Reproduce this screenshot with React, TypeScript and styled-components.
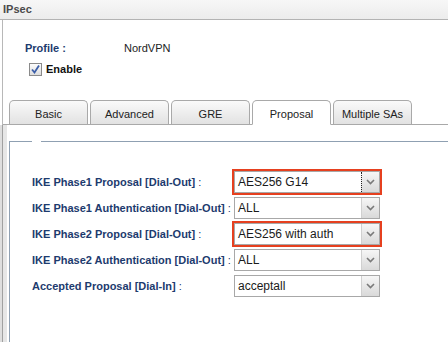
import styled, { createGlobalStyle } from 'styled-components'

const GlobalStyle = createGlobalStyle`
	html, body {
		margin: 0;
		padding: 0;
		background: #fff;
		font-family: "Liberation Sans", Arial, sans-serif;
		font-size: 11px;
	}
`

const tabs = ['Basic', 'Advanced', 'GRE', 'Proposal', 'Multiple SAs']

const rows = [
	{ label: 'IKE Phase1 Proposal [Dial-Out]', value: 'AES256 G14', marked: true, focused: true },
	{ label: 'IKE Phase1 Authentication [Dial-Out]', value: 'ALL' },
	{ label: 'IKE Phase2 Proposal [Dial-Out]', value: 'AES256 with auth', marked: true },
	{ label: 'IKE Phase2 Authentication [Dial-Out]', value: 'ALL' },
	{ label: 'Accepted Proposal [Dial-In]', value: 'acceptall' },
]

const Chevron = () => (
	<svg width="9" height="6" viewBox="0 0 9 6">
		<path d="M1 1 L4.5 4.5 L8 1" fill="none" stroke="#7a7a7a" strokeWidth="1.6" />
	</svg>
)

const App = () => {
	return (
		<Page>
			<GlobalStyle />
			<Header>IPsec</Header>
			<Content>
				<Profile>
					<Label>Profile :</Label>
					<Value>NordVPN</Value>
				</Profile>
				<EnableRow>
					<Check>
						<svg width="11" height="11" viewBox="0 0 11 11">
							<path d="M2 5.5 L4.5 8.5 L9 1.5" fill="none" stroke="#3b5ea8" strokeWidth="1.8" />
						</svg>
					</Check>
					Enable
				</EnableRow>
				<TabBar>
					{tabs.map(t => (
						<Tab key={t} $active={t === 'Proposal'}>{t}</Tab>
					))}
				</TabBar>
				<TabPanel>
					<Fieldset>
						<legend>&nbsp;&nbsp;</legend>
						{rows.map(r => (
							<Row key={r.label}>
								<RowLabel>
									{r.label} <Colon>:</Colon>
								</RowLabel>
								<Mark $marked={!!r.marked}>
									<Select>
										<SelectText>{r.value}</SelectText>
										<Arrow $focused={!!r.focused}>
											<Chevron />
										</Arrow>
									</Select>
								</Mark>
							</Row>
						))}
					</Fieldset>
				</TabPanel>
			</Content>
		</Page>
	)
}

const Page = styled.div`
	width: 448px;
	height: 342px;
	overflow: hidden;
`

const Header = styled.div`
	height: 19px;
	line-height: 19px;
	padding-left: 3px;
	border-bottom: 1px solid #b3b3b3;
	background: linear-gradient(#f7f7f7, #ececec);
	font-size: 11px;
	font-weight: bold;
	color: #4a4a4a;
`

const Content = styled.div`
	margin-left: 2px;
	border-left: 1px solid #b8b8b8;
	height: 322px;
`

const Profile = styled.div`
	display: grid;
	grid-template-columns: 99px auto;
	padding: 21px 0 0 22px;
	line-height: 14px;
`

const Label = styled.span`
	font-weight: bold;
	color: #1d3b6e;
`

const Value = styled.span`
	color: #222;
`

const EnableRow = styled.label`
	display: flex;
	align-items: center;
	gap: 4px;
	margin: 7px 0 0 26px;
	font-weight: bold;
	color: #111;
	height: 14px;
`

const Check = styled.span`
	width: 11px;
	height: 11px;
	border: 1px solid #8a8a8a;
	background: linear-gradient(#fdfdfd, #dcdcdc);
	display: flex;
	align-items: center;
	justify-content: center;
`

const TabBar = styled.div`
	display: flex;
	gap: 2px;
	margin-top: 23px;
	padding-left: 6px;
	border-bottom: 1px solid #a9a9a9;
	height: 25px;
	align-items: flex-end;
`

const Tab = styled.div<{ $active: boolean }>`
	width: 79px;
	height: ${p => (p.$active ? '25px' : '24px')};
	margin-bottom: ${p => (p.$active ? '-1px' : '0')};
	border: 1px solid #a9a9a9;
	border-bottom: ${p => (p.$active ? '1px solid #fff' : 'none')};
	border-radius: 5px 5px 0 0;
	background: ${p => (p.$active ? '#fff' : 'linear-gradient(#fafafa, #e2e2e2)')};
	color: #222;
	display: flex;
	align-items: center;
	justify-content: center;
	font-size: 11px;
	padding-top: 2px;
	box-sizing: border-box;
`

const TabPanel = styled.div`
	margin-left: -3px;
	padding: 16px 0 0 9px;
	height: 260px;
	background: linear-gradient(
		to right,
		#dedede 0 2px,
		#a0a0a0 2px 3px,
		#e6e6e6 3px 7px,
		#fff 7px
	);
`

const Fieldset = styled.fieldset`
	margin: 0;
	padding: 27px 0 0 22px;
	border: none;
	border-top: 1px solid #8fa0b2;
	border-left: 1px solid #8fa0b2;
	height: 240px;
	background: #fff;

	legend {
		padding: 0 4px;
		font-size: 1px;
		line-height: 1px;
	}
`

const Row = styled.div`
	display: grid;
	grid-template-columns: 202px auto;
	align-items: center;
	height: 26px;
`

const RowLabel = styled.span`
	font-weight: bold;
	color: #1d3b6e;
	white-space: nowrap;
`

const Colon = styled.span`
	font-weight: normal;
`

const Mark = styled.div<{ $marked: boolean }>`
	width: 146px;
	border: 2px solid ${p => (p.$marked ? '#e6401f' : 'transparent')};
	margin: -2px 0 -2px -2px;
`

const Select = styled.div`
	display: flex;
	height: 20px;
	border: 1px solid #a8a8a8;
	background: #fff;
`

const SelectText = styled.span`
	flex: 1;
	padding-left: 3px;
	line-height: 20px;
	font-size: 12px;
	color: #1a1a1a;
`

const Arrow = styled.span<{ $focused: boolean }>`
	width: 17px;
	border-left: 1px ${p => (p.$focused ? 'dotted #222' : 'solid #d0d0d0')};
	background: linear-gradient(#f6f6f6, #d9d9d9);
	display: flex;
	align-items: center;
	justify-content: center;
`

export default App
